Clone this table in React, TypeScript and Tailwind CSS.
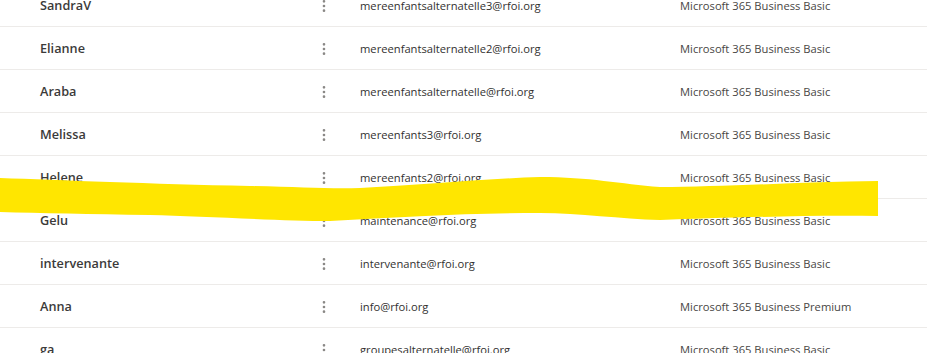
import { EllipsisVertical } from "lucide-react";

type User = { name: string; email: string; licence: string };

const users: User[] = [
  { name: "SandraV", email: "mereenfantsalternatelle3@rfoi.org", licence: "Microsoft 365 Business Basic" },
  { name: "Elianne", email: "mereenfantsalternatelle2@rfoi.org", licence: "Microsoft 365 Business Basic" },
  { name: "Araba", email: "mereenfantsalternatelle@rfoi.org", licence: "Microsoft 365 Business Basic" },
  { name: "Melissa", email: "mereenfants3@rfoi.org", licence: "Microsoft 365 Business Basic" },
  { name: "Helene", email: "mereenfants2@rfoi.org", licence: "Microsoft 365 Business Basic" },
  { name: "Gelu", email: "maintenance@rfoi.org", licence: "Microsoft 365 Business Basic" },
  { name: "intervenante", email: "intervenante@rfoi.org", licence: "Microsoft 365 Business Basic" },
  { name: "Anna", email: "info@rfoi.org", licence: "Microsoft 365 Business Premium" },
  { name: "ga", email: "groupesalternatelle@rfoi.org", licence: "Microsoft 365 Business Basic" },
];

// ─── One row of the users list ─────────────────────────────────────────────
function UserRow({ user }: { user: User }) {
  return (
    <div className="flex h-[43px] items-center border-b border-[#edebe9] pt-[2px]">
      <div className="w-[283px] shrink-0 pl-[40px] text-[12.7px] font-semibold text-[#3b3a39]">
        {user.name}
      </div>
      <div className="flex w-[77px] shrink-0 items-center">
        <EllipsisVertical size={16} strokeWidth={2} className="ml-[33px] text-[#8a8886]" />
      </div>
      <div className="w-[320px] shrink-0 text-[11.2px] text-[#323130]">{user.email}</div>
      <div className="text-[11.2px] text-[#484644]">{user.licence}</div>
    </div>
  );
}

export default function App() {
  return (
    <div
      className="relative h-[353px] w-[927px] overflow-hidden bg-white"
      style={{ fontFamily: '"Open Sans", "Noto Sans", sans-serif' }}
    >
      <div className="-mt-[16px]">
        {users.map((u) => (
          <UserRow key={u.email} user={u} />
        ))}
      </div>

      {/* Yellow marker stroke hiding a row */}
      <svg
        className="pointer-events-none absolute left-0 top-0"
        width="927"
        height="353"
        viewBox="0 0 927 353"
      >
        <path
          d="M0,178 C60,180 150,184 250,186 C300,187 330,189 360,188 C420,185 480,179 540,177 C590,177 620,184 660,187 C720,187 800,182 878,181 L878,216 C800,215 720,218 660,220 C620,219 580,213 540,213 C470,213 400,217 330,221 C280,221 200,216 150,215 C90,214 40,213 0,212 Z"
          fill="#ffe600"
        />
      </svg>
    </div>
  );
}
